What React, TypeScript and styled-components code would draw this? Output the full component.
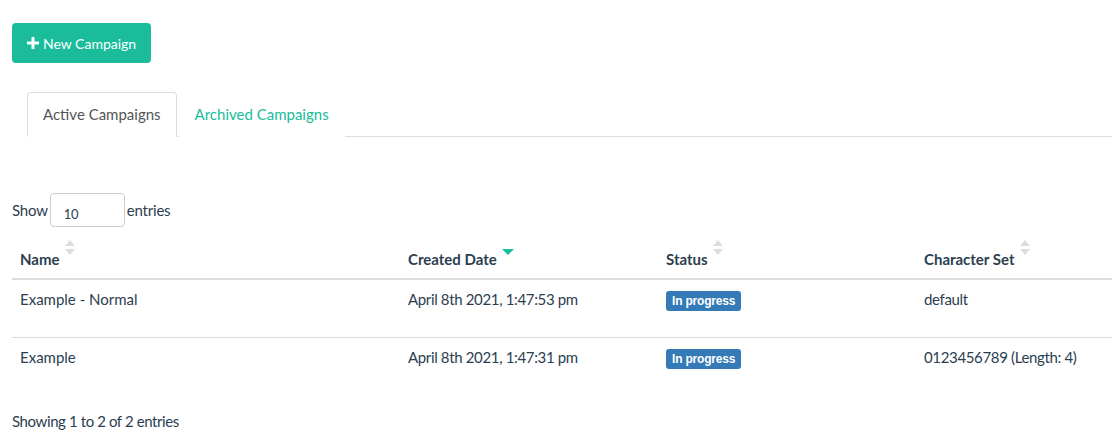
import React, { FC } from 'react'
import styled, { createGlobalStyle } from 'styled-components'

const GlobalStyle = createGlobalStyle`
  html, body {
    margin: 0;
    padding: 0;
    background: #fff;
    overflow: hidden;
  }
  body {
    font-family: 'Lato', 'Liberation Sans', sans-serif;
    font-size: 15px;
    line-height: 21px;
    color: #2c3e50;
  }
`

const Page = styled.div`
  width: 1112px;
  height: 444px;
  padding: 23px 0 0 12px;
  box-sizing: border-box;
  overflow: hidden;
`

const PrimaryButton = styled.button`
  display: inline-flex;
  align-items: center;
  gap: 4px;
  height: 40px;
  padding: 0 15px;
  border: none;
  border-radius: 4px;
  background: #1abc9c;
  color: #fff;
  font-family: inherit;
  font-size: 14px;
`

const Tabs = styled.ul`
  display: flex;
  list-style: none;
  margin: 29px 0 0 15px;
  padding: 0;
  border-bottom: 1px solid #ddd;
`

const Tab = styled.li<{ $active?: boolean }>`
  margin: 0 2px -1px 0;
  padding: 11px 15px;
  line-height: 21px;
  border: 1px solid ${(p) => (p.$active ? '#ddd' : 'transparent')};
  border-bottom-color: ${(p) => (p.$active ? '#fff' : 'transparent')};
  border-radius: 4px 4px 0 0;
  background: #fff;
  color: ${(p) => (p.$active ? '#555' : '#18bc9c')};
`

const LengthRow = styled.div`
  display: flex;
  align-items: center;
  gap: 2px;
  margin-top: 56px;
  letter-spacing: -0.2px;
`

const LengthInput = styled.div`
  width: 75px;
  height: 34px;
  box-sizing: border-box;
  border: 1px solid #ccc;
  border-radius: 4px;
  padding: 10px 0 0 13px;
  font-size: 13px;
  line-height: 20px;
  color: #2c3e50;
`

const Table = styled.table`
  width: 1162px;
  margin-top: 5px;
  border-collapse: collapse;
  table-layout: fixed;
`

const Th = styled.th`
  padding: 8px;
  height: 21px;
  text-align: left;
  vertical-align: bottom;
  font-weight: 700;
  border-bottom: 2px solid #ddd;
  white-space: nowrap;
`

const Td = styled.td<{ $numeric?: boolean }>`
  padding: 9px 8px 8px;
  height: 40px;
  vertical-align: top;
  border-top: 1px solid #ddd;
  white-space: nowrap;
  letter-spacing: ${(p) => (p.$numeric ? '-0.35px' : 'normal')};
`

const SortIcon = styled.svg<{ $lift?: number }>`
  display: inline-block;
  margin-left: 5px;
  vertical-align: ${(p) => p.$lift ?? 8}px;
`

const Badge = styled.span`
  display: inline-block;
  padding: 3px 6px;
  border-radius: 3px;
  background: #337ab7;
  color: #fff;
  font-family: 'Liberation Sans', sans-serif;
  font-size: 12px;
  font-weight: 700;
  line-height: 14px;
  letter-spacing: -0.2px;
`

const Info = styled.div`
  margin-top: 16px;
  letter-spacing: -0.4px;
`

const Both: FC = () => (
  <SortIcon width="10" height="15" viewBox="0 0 10 15" $lift={10}>
    <path d="M5 0 L10 6 H0 Z" fill="#ddd" />
    <path d="M0 9 H10 L5 15 Z" fill="#ddd" />
  </SortIcon>
)

const Desc: FC = () => (
  <SortIcon width="12" height="7" viewBox="0 0 12 7" $lift={9}>
    <path d="M0 0 H12 L6 6 Z" fill="#1abc9c" />
  </SortIcon>
)

const rows = [
  { name: 'Example - Normal', date: 'April 8th 2021, 1:47:53 pm', set: 'default' },
  { name: 'Example', date: 'April 8th 2021, 1:47:31 pm', set: '0123456789 (Length: 4)' },
]

const App: FC = () => (
  <Page>
    <GlobalStyle />
    <PrimaryButton>
      <svg width="12" height="12" viewBox="0 0 12 12">
        <path d="M4.5 0 H7.5 V4.5 H12 V7.5 H7.5 V12 H4.5 V7.5 H0 V4.5 H4.5 Z" fill="#fff" />
      </svg>
      New Campaign
    </PrimaryButton>
    <Tabs>
      <Tab $active>Active Campaigns</Tab>
      <Tab>Archived Campaigns</Tab>
    </Tabs>
    <LengthRow>
      Show <LengthInput>10</LengthInput> entries
    </LengthRow>
    <Table>
      <colgroup>
        <col style={{ width: 388 }} />
        <col style={{ width: 258 }} />
        <col style={{ width: 258 }} />
        <col style={{ width: 258 }} />
      </colgroup>
      <thead>
        <tr>
          <Th>
            Name<Both />
          </Th>
          <Th>
            Created Date<Desc />
          </Th>
          <Th>
            Status<Both />
          </Th>
          <Th>
            Character Set<Both />
          </Th>
        </tr>
      </thead>
      <tbody>
        {rows.map((r) => (
          <tr key={r.date}>
            <Td>{r.name}</Td>
            <Td $numeric>{r.date}</Td>
            <Td>
              <Badge>In progress</Badge>
            </Td>
            <Td $numeric>{r.set}</Td>
          </tr>
        ))}
      </tbody>
    </Table>
    <Info>Showing 1 to 2 of 2 entries</Info>
  </Page>
)

export default App
